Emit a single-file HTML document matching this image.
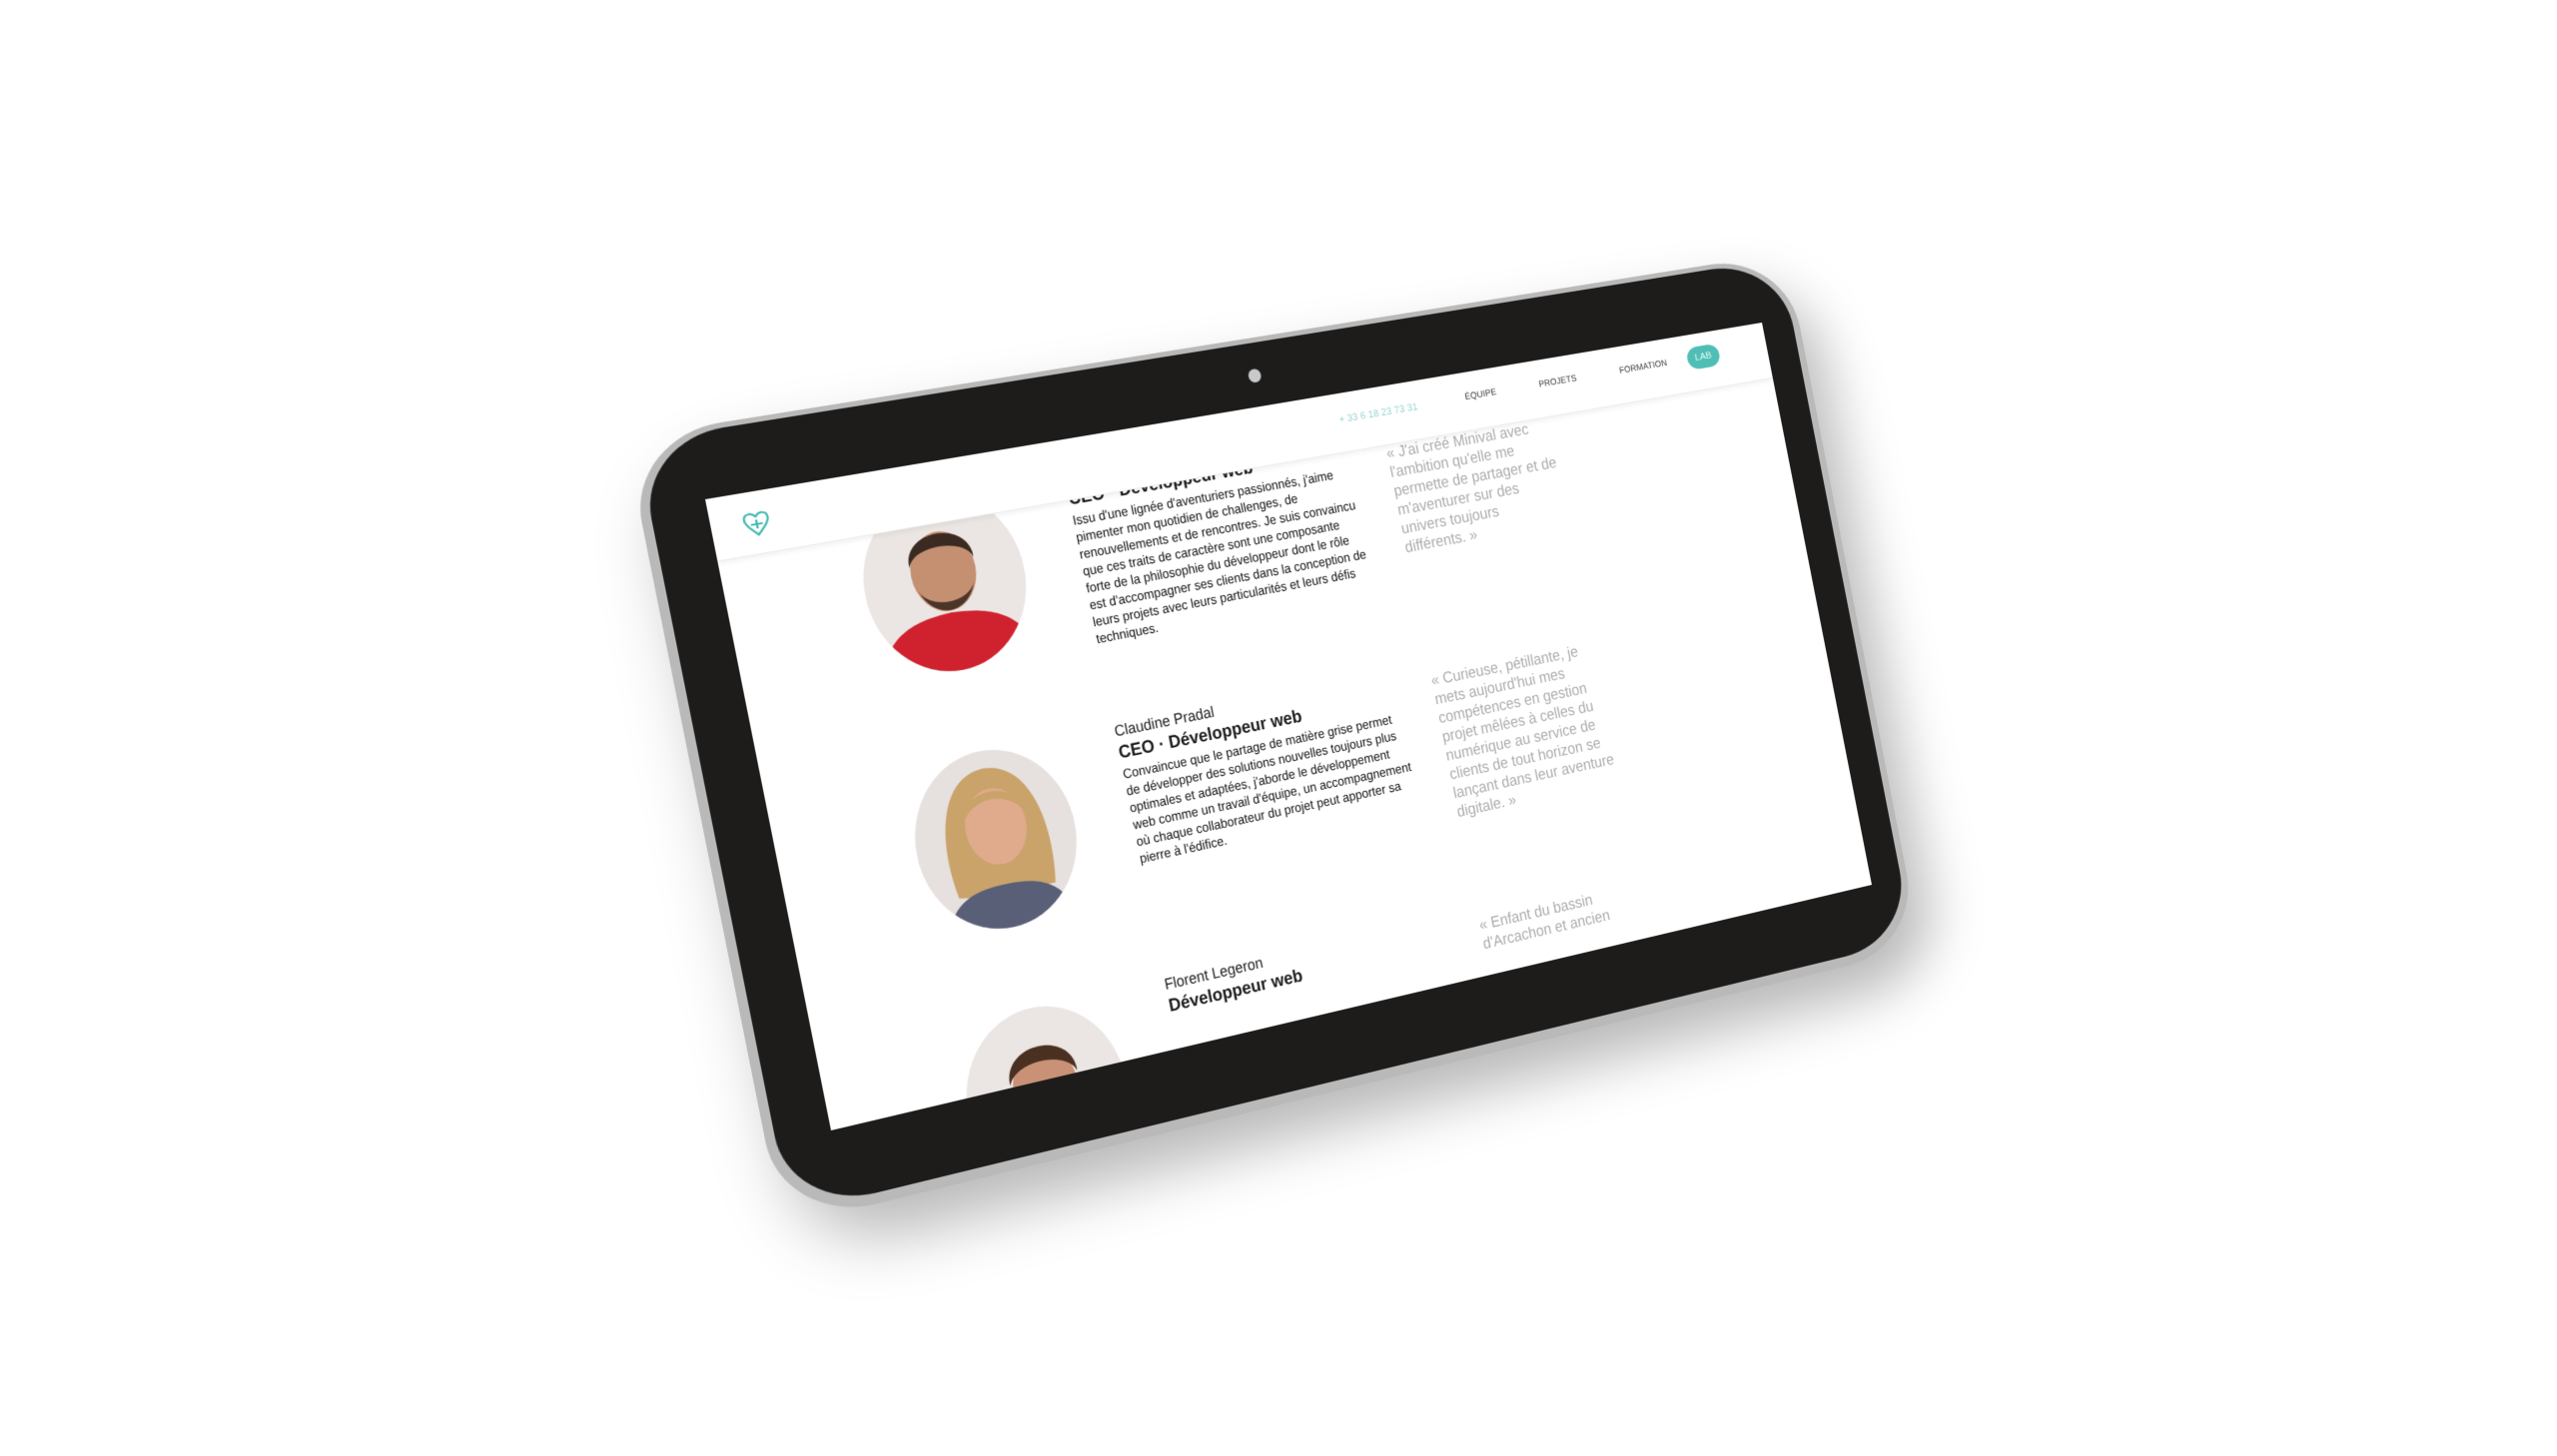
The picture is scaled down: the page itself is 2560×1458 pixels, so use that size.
<!DOCTYPE html>
<html><head><meta charset="utf-8">
<style>
html,body{margin:0;padding:0;background:#fff;width:2560px;height:1458px;overflow:hidden;}
#w{position:absolute;left:0;top:0;width:1200px;height:720px;transform-origin:0 0;
transform:matrix3d(1.06332,-0.114242,0,0.000102975,0.17767,0.881417,0,0.00000321,0,0,1,0,706,500,0,1);}
#bez{position:absolute;left:-66px;top:-82px;width:1312px;height:894px;border-radius:96px;background:#b9b9b9;
box-shadow:20px 40px 70px rgba(0,0,0,0.28);}
#bez2{position:absolute;left:10px;top:6px;right:8px;bottom:12px;border-radius:88px;background:#1e1c1b;}
#cam{position:absolute;left:589px;top:-45px;width:14px;height:16px;border-radius:50%;background:#c9c9c9;}
#scr{position:absolute;left:0;top:0;width:1200px;height:720px;background:#fff;overflow:hidden;
font-family:"Liberation Sans Narrow","Liberation Sans",sans-serif;color:#1c1c1c;}
#hdr{position:absolute;left:0;top:0;width:1200px;height:70px;background:#fff;border-bottom:1px solid #ececec;box-shadow:0 3px 6px rgba(0,0,0,0.06);z-index:5;}
.nav{position:absolute;top:24px;font-size:11px;transform:translateX(-50%) scaleX(0.88);white-space:nowrap;color:#333;letter-spacing:0.2px;}
.lab{position:absolute;left:1100px;top:16px;width:40px;height:28px;border-radius:14px;background:#4fbfb6;color:#e8fbf9;font-size:11px;text-align:center;line-height:28px;}
.p{position:absolute;left:0;width:1200px;height:300px;}
.ph{position:absolute;left:140px;top:0;width:168px;height:205px;border-radius:50%;overflow:hidden;background:#e8e4e2;}
.nm,.tt,.ds,.qt{transform:scaleX(0.86);transform-origin:0 0;white-space:nowrap;}
.nm{position:absolute;left:369px;top:-2px;font-size:18px;}
.tt{position:absolute;left:369px;top:22px;font-size:21px;font-weight:bold;}
.ds{position:absolute;left:369px;top:50px;font-size:15.5px;line-height:20px;color:#111;}
.qt{position:absolute;left:726px;top:12px;font-size:19px;line-height:23px;color:#aaa;}
</style></head><body>
<div id="w">
 <div id="bez"><div id="bez2"></div></div>
 <div id="cam"></div>
 <div id="scr">
  <div id="hdr">
   <svg style="position:absolute;left:30px;top:20px" width="32" height="32" viewBox="0 0 32 32" fill="none" stroke="#3fb8af" stroke-width="2.2">
    <path d="M16 9 C13 3 4 3 4 11 C4 18 12 24 16 29 C20 24 28 18 28 11 C28 3 19 3 16 9"/>
    <path d="M10 17 L22 17 M16 12 L16 22"/>
   </svg>
   <div class="nav" style="left:726px;color:#8fd3cf;font-size:12px">+ 33 6 18 23 73 31</div>
   <div class="nav" style="left:847px">ÉQUIPE</div>
   <div class="nav" style="left:940px">PROJETS</div>
   <div class="nav" style="left:1045px">FORMATION</div>
   <div class="lab">LAB</div>
  </div>

  <div class="p" style="top:36px">
   <div class="ph"><svg width="168" height="205" viewBox="0 0 168 205">
    <rect width="168" height="205" fill="#ebe6e4"/>
    <path d="M0 205 C10 150 45 140 84 138 C123 140 158 150 168 205Z" fill="#d0222e"/>
    <ellipse cx="84" cy="90" rx="34" ry="46" fill="#c58f72"/>
    <path d="M50 80 C48 35 120 35 118 80 C112 55 56 55 50 80Z" fill="#3a2a22"/>
    <path d="M54 105 C64 145 104 145 114 105 C108 132 60 132 54 105Z" fill="#4a3528"/>
   </svg></div>
   <div class="nm">Max</div>
   <div class="tt">CEO · Développeur web</div>
   <div class="ds">Issu d'une lignée d'aventuriers passionnés, j'aime<br>pimenter mon quotidien de challenges, de<br>renouvellements et de rencontres. Je suis convaincu<br>que ces traits de caractère sont une composante<br>forte de la philosophie du développeur dont le rôle<br>est d'accompagner ses clients dans la conception de<br>leurs projets avec leurs particularités et leurs défis<br>techniques.</div>
   <div class="qt" style="top:34px">« J'ai créé Minival avec<br>l'ambition qu'elle me<br>permette de partager et de<br>m'aventurer sur des<br>univers toujours<br>différents. »</div>
  </div>

  <div class="p" style="top:336px">
   <div class="ph"><svg width="168" height="205" viewBox="0 0 168 205">
    <rect width="168" height="205" fill="#e6e1df"/>
    <path d="M34 160 C24 100 34 22 84 20 C134 22 146 100 136 165 L110 165 L60 165Z" fill="#c9a36a"/>
    <path d="M15 205 C25 160 55 155 84 155 C113 155 143 160 153 205Z" fill="#5a5f78"/>
    <ellipse cx="86" cy="88" rx="32" ry="44" fill="#e0ab8c"/>
    <path d="M54 76 C56 38 116 38 118 76 C104 50 68 50 54 76Z" fill="#c9a36a"/>
   </svg></div>
   <div class="nm">Claudine Pradal</div>
   <div class="tt">CEO · Développeur web</div>
   <div class="ds">Convaincue que le partage de matière grise permet<br>de développer des solutions nouvelles toujours plus<br>optimales et adaptées, j'aborde le développement<br>web comme un travail d'équipe, un accompagnement<br>où chaque collaborateur du projet peut apporter sa<br>pierre à l'édifice.</div>
   <div class="qt">« Curieuse, pétillante, je<br>mets aujourd'hui mes<br>compétences en gestion<br>projet mêlées à celles du<br>numérique au service de<br>clients de tout horizon se<br>lançant dans leur aventure<br>digitale. »</div>
  </div>

  <div class="p" style="top:636px">
   <div class="ph"><svg width="168" height="205" viewBox="0 0 168 205">
    <rect width="168" height="205" fill="#ebe6e4"/>
    <ellipse cx="84" cy="92" rx="34" ry="46" fill="#c99276"/>
    <path d="M48 82 C46 32 122 32 120 82 C112 55 56 55 48 82Z" fill="#4a3020"/>
   </svg></div>
   <div class="nm">Florent Legeron</div>
   <div class="tt">Développeur web</div>
   <div class="qt">« Enfant du bassin<br>d'Arcachon et ancien</div>
  </div>
 </div>
</div>
</body></html>
